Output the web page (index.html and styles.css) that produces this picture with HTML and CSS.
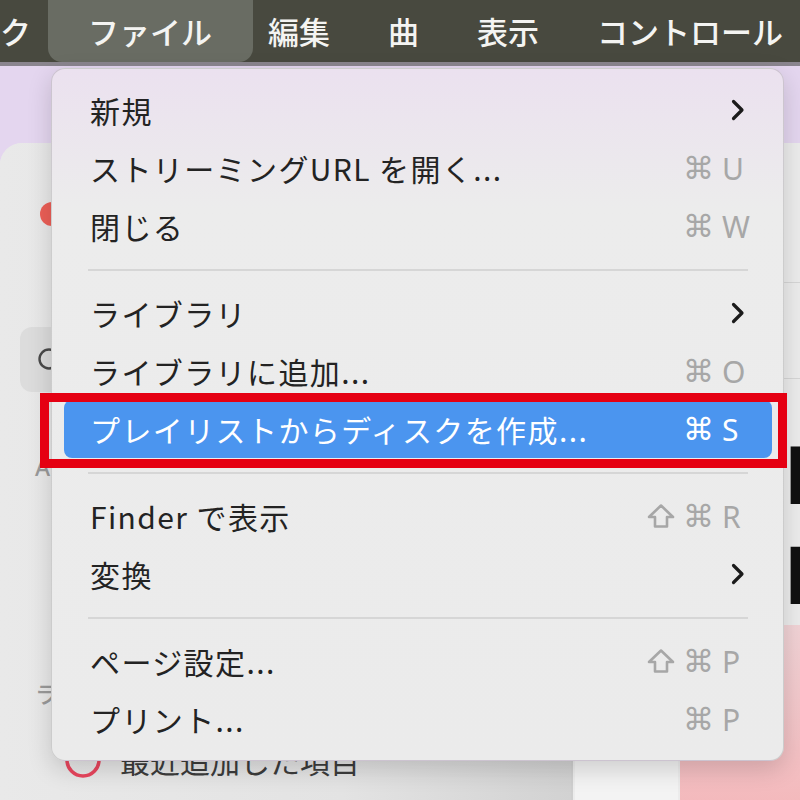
FILE: index.html
```html
<!DOCTYPE html>
<html lang="ja">
<head>
<meta charset="utf-8">
<title>ファイル メニュー</title>
<link rel="stylesheet" href="styles.css">
</head>
<body>
<div class="screen">
  <header class="menubar">
    <span class="mb-item mb-first">ク</span>
    <span class="mb-item mb-active">ファイル</span>
    <span class="mb-item">編集</span>
    <span class="mb-item">曲</span>
    <span class="mb-item">表示</span>
    <span class="mb-item">コントロール</span>
  </header>

  <div class="desktop">
    <div class="window">
      <aside class="sidebar">
        <div class="traffic"><span class="tl tl-red"></span><span class="tl tl-yellow"></span><span class="tl tl-green"></span></div>
        <div class="search">
          <svg class="search-icon" width="26" height="26" viewBox="0 0 26 26"><circle cx="12" cy="12" r="9.5" fill="none" stroke="#4a4a4a" stroke-width="2.4"/><line x1="19" y1="19" x2="25" y2="25" stroke="#4a4a4a" stroke-width="2.4"/></svg>
        </div>
        <div class="sb-label sb-apple">A</div>
        <div class="sb-label sb-lib">ラ</div>
        <div class="sb-row">
          <svg class="sb-icon" width="40" height="40" viewBox="0 0 40 40"><circle cx="20" cy="20" r="16" fill="none" stroke="#e9465e" stroke-width="3.5"/></svg>
          <span>最近追加した項目</span>
        </div>
      </aside>
      <main class="content">
        <div class="toolbar"></div>
        <div class="band"></div>
        <h1 class="title"><span>I</span><span>P</span></h1>
        <div class="tiles"><div class="tile tile-white"></div><div class="tile tile-pink"></div></div>
      </main>
    </div>
  </div>

  <nav class="menu">
    <div class="mi"><span>新規</span><svg class="chev" width="14" height="22" viewBox="0 0 14 22"><polyline points="2.5,2.5 11,11 2.5,19.5" fill="none" stroke="#1b1b1b" stroke-width="3.2" stroke-linecap="round" stroke-linejoin="round"/></svg></div>
    <div class="mi"><span>ストリーミングURL を開く...</span><span class="sc"><span class="mod">⌘</span><span class="key">U</span></span></div>
    <div class="mi"><span>閉じる</span><span class="sc"><span class="mod">⌘</span><span class="key">W</span></span></div>
    <div class="sep"></div>
    <div class="mi"><span>ライブラリ</span><svg class="chev" width="14" height="22" viewBox="0 0 14 22"><polyline points="2.5,2.5 11,11 2.5,19.5" fill="none" stroke="#1b1b1b" stroke-width="3.2" stroke-linecap="round" stroke-linejoin="round"/></svg></div>
    <div class="mi"><span>ライブラリに追加...</span><span class="sc"><span class="mod">⌘</span><span class="key">O</span></span></div>
    <div class="mi sel"><span>プレイリストからディスクを作成...</span><span class="sc"><span class="mod">⌘</span><span class="key">S</span></span></div>
    <div class="sep"></div>
    <div class="mi"><span>Finder で表示</span><span class="sc"><svg class="shift" width="36" height="26" viewBox="0 0 36 26"><path d="M14 2.5 L26 14 L20 14 L20 23.5 L8 23.5 L8 14 L2 14 Z" fill="none" stroke="#a7a7a7" stroke-width="2.6" stroke-linejoin="round"/></svg><span class="mod">⌘</span><span class="key">R</span></span></div>
    <div class="mi"><span>変換</span><svg class="chev" width="14" height="22" viewBox="0 0 14 22"><polyline points="2.5,2.5 11,11 2.5,19.5" fill="none" stroke="#1b1b1b" stroke-width="3.2" stroke-linecap="round" stroke-linejoin="round"/></svg></div>
    <div class="sep"></div>
    <div class="mi"><span>ページ設定...</span><span class="sc"><svg class="shift" width="36" height="26" viewBox="0 0 36 26"><path d="M14 2.5 L26 14 L20 14 L20 23.5 L8 23.5 L8 14 L2 14 Z" fill="none" stroke="#a7a7a7" stroke-width="2.6" stroke-linejoin="round"/></svg><span class="mod">⌘</span><span class="key">P</span></span></div>
    <div class="mi"><span>プリント...</span><span class="sc"><span class="mod">⌘</span><span class="key">P</span></span></div>
  </nav>

  <div class="annot"></div>
</div>
</body>
</html>
```

FILE: styles.css
```css
* { box-sizing: border-box; margin: 0; padding: 0; }

html, body { width: 800px; height: 800px; overflow: hidden; }

body {
  background: #e4d6ef;
  font-family: "Noto Sans CJK JP", "Noto Sans", sans-serif;
}

.screen {
  position: relative;
  width: 800px;
  height: 800px;
  overflow: hidden;
}

/* ---------- menu bar ---------- */
.menubar {
  height: 66px;
  background: #48493f;
  border-bottom: 4px solid #8a858e;
  display: flex;
  color: #f4f4f2;
  font-size: 31px;
  font-weight: 500;
  white-space: nowrap;
}

.mb-item {
  padding: 0 29px;
  line-height: 62px;
}

.mb-first { padding: 0 17px 0 0; }

.mb-active {
  background: #696c63;
  padding: 0 41px 0 40px;
  margin-right: -14px;
  border-radius: 0 0 14px 14px;
}

/* ---------- background window ---------- */
.desktop { padding-top: 77px; }

.window {
  display: grid;
  grid-template-columns: 573px 1fr;
  height: 657px;
  border-radius: 22px 0 0 0;
  overflow: hidden;
  background: #e9e9e9;
}

.sidebar {
  background: linear-gradient(to right, #e9e9e9 0%, #e3e3e3 60%, #d2d2d2 100%);
  border-right: 2px solid #cfcfcf;
}

.traffic {
  display: flex;
  gap: 14px;
  margin-top: 59px;
  padding-left: 40px;
}

.tl { width: 24px; height: 24px; border-radius: 50%; }
.tl-red { background: #ec5f57; }
.tl-yellow { background: #f5bf4f; }
.tl-green { background: #61c554; }

.search {
  margin: 101px 0 0 20px;
  width: 520px;
  height: 65px;
  border-radius: 12px;
  background: #dcdcdc;
  display: flex;
  align-items: center;
  padding-left: 17px;
}

.sb-label {
  padding-left: 35px;
  font-size: 23px;
  line-height: 30px;
  color: #9a9a9a;
  font-weight: 500;
}

.sb-apple { margin-top: 60px; font-family: "Noto Sans", sans-serif; }
.sb-lib { margin-top: 196px; }

.sb-row {
  margin-top: 30px;
  height: 44px;
  display: flex;
  align-items: center;
  gap: 17px;
  padding-left: 63px;
  font-size: 30px;
  color: #3c3c3c;
  white-space: nowrap;
}

.content {
  background: #ececec;
  white-space: nowrap;
}

.toolbar { height: 140px; border-bottom: 1px solid #d6d6d6; }
.band { height: 96px; border-bottom: 1px solid #d6d6d6; }

.title {
  margin-top: 46px;
  padding-left: 212px;
  font-family: "Liberation Sans", sans-serif;
  font-size: 84px;
  font-weight: 700;
  line-height: 100px;
  color: #111;
  display: flex;
  flex-direction: column;
}

.tiles {
  display: flex;
  gap: 2px;
  padding-left: 2px;
  height: 200px;
}

.tile-white { width: 103px; background: #f3f3f3; }
.tile-pink { flex: 1; background: linear-gradient(#f1d3d6, #f4b6b9); }

/* ---------- dropdown menu ---------- */
.menu {
  position: absolute;
  left: 51px;
  top: 68px;
  width: 733px;
  padding: 12px 11px 12px 12px;
  border-radius: 14px;
  border: 1px solid rgba(0, 0, 0, 0.13);
  background: linear-gradient(180deg, #ebe1ef 0px, #ececec 140px, #ebebeb 100%);
  box-shadow: 0 8px 24px rgba(0, 0, 0, 0.16);
  z-index: 2;
}

.mi {
  display: flex;
  align-items: center;
  justify-content: space-between;
  height: 58px;
  padding: 0 27px 0 26px;
  border-radius: 8px;
  font-size: 30px;
  letter-spacing: 1.4px;
  color: #232323;
  white-space: nowrap;
}

.mi.sel {
  background: #4b95ef;
  color: #ffffff;
}

.sep {
  height: 29px;
  display: flex;
  align-items: center;
  padding: 0 24px;
}

.sep::before {
  content: "";
  flex: 1;
  height: 2px;
  background: #d6d6d6;
}

.sc {
  display: flex;
  align-items: center;
  color: #a7a7a7;
  letter-spacing: 0;
}

.mi.sel .sc { color: #ffffff; }

.mod {
  font-family: "DejaVu Sans", sans-serif;
  font-size: 31px;
  width: 39px;
}

.shift { display: block; }

.key {
  font-family: "Noto Sans", sans-serif;
  font-size: 30px;
  width: 23px;
}

.chev { display: block; }

/* ---------- annotation ---------- */
.annot {
  position: absolute;
  left: 40px;
  top: 393px;
  width: 747px;
  height: 75px;
  border: 9px solid #e50012;
  z-index: 3;
}
```
